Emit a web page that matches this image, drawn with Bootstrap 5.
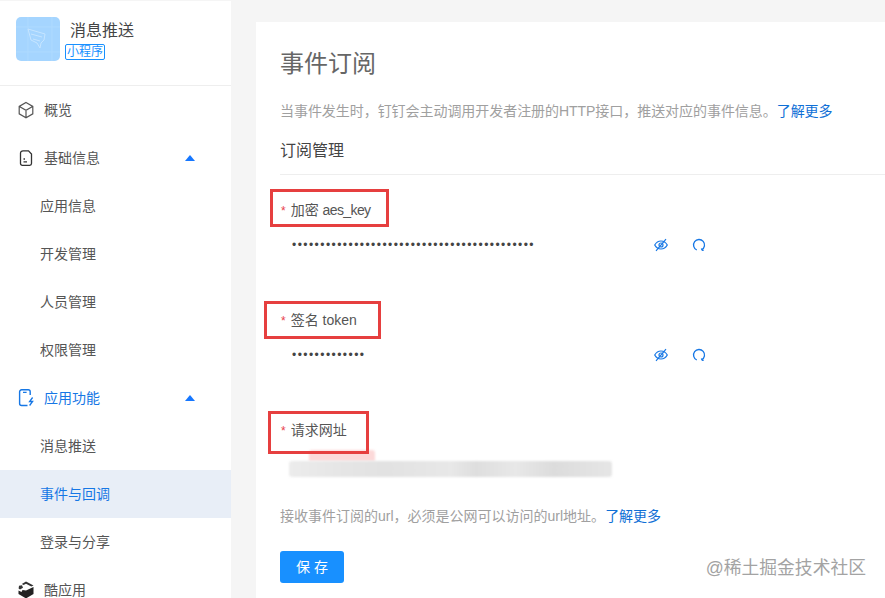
<!DOCTYPE html>
<html lang="zh-CN">
<head>
<meta charset="utf-8">
<title>事件订阅</title>
<link href="https://cdn.jsdelivr.net/npm/bootstrap@5.3.0/dist/css/bootstrap.min.css" rel="stylesheet">
<style>
html,body{height:598px;overflow:hidden}
body{background:#f5f5f5;font-family:"Liberation Sans","Noto Sans CJK SC",sans-serif;font-size:14px;color:#333;padding-top:1px}
.shell{height:597px}
.side{width:231px;flex:none;background:#fff;height:597px;overflow:hidden}
.side-head{height:85px;border-bottom:1px solid #eee;padding:16px 0 0 16px;gap:5px}
.logo{width:44px;height:44px;border-radius:5px;background:#a5d5ff;flex:none;overflow:hidden}
.app-name{font-size:16px;line-height:26px;color:#444;margin-left:5px;padding-top:1px}
.app-tag{display:block;font-size:12px;line-height:14px;border:1px solid #1890ff;border-radius:2px;color:#1890ff;text-align:center;height:16px;width:40px;white-space:nowrap}
.nav-row{height:48px;padding-left:17px;color:#555;gap:9px}
.nav-row svg.ico{width:18px;height:18px;flex:none}
.nav-sub{height:48px;padding-left:40px;color:#555}
.nav-on{color:#1677e5}
.nav-cur{background:#e8eef7;color:#1677e5}
.caret{width:0;height:0;border:5.5px solid transparent;border-top:0;border-bottom:6px solid #1677ff;margin-left:auto;margin-right:36px}
.panel{background:#fff;margin:21px 0 0 25px;flex:1;min-width:0;height:576px;padding:0 0 0 24px;position:relative}
.page-title{font-size:24px;line-height:34px;color:#666;margin:25px 0 0;font-weight:400}
.page-desc{color:#a0a0a0;line-height:22px;margin:19px 0 0;letter-spacing:-.05px}
.more{color:#0f6fd6;text-decoration:none}
.section-title{font-size:16px;line-height:24px;color:#444;margin:17px 0 0;font-weight:400;padding-bottom:11px;border-bottom:1px solid #eee}
.field{height:110px;padding-top:24px;position:relative}
.field-label{line-height:22px;color:#555;margin:0;padding-left:1px}
.req{color:#e8404a;margin-right:5px;font-size:12px}
.tight{letter-spacing:-.6px}
.secret{border:0;background:none;padding:0 0 0 12px;font:12px/22px "Liberation Sans",sans-serif;letter-spacing:1.45px;color:#444;width:300px;outline:0;height:22px}
.value-row{margin-top:12px;height:22px}
.act-a{margin-left:74px}
.act-b{margin-left:24px}
.mark-box{position:absolute;border:3px solid #e63f3f;box-sizing:border-box}
.blur-bar{margin:19px 0 0 9px;width:323px;height:16px;background:linear-gradient(90deg,#ececec 0,#e6e6e6 15%,#e2e2e2 30%,#e8e8e8 50%,#dedede 58%,#e8e8e8 70%,#dcdcdc 82%,#e6e6e6 100%);border-radius:3px;filter:blur(1px)}
.blur-pink{position:absolute;left:29px;top:55px;width:66px;height:11px;background:#fcd9d9;border-radius:3px 3px 0 0;filter:blur(1px)}
.help{color:#a0a0a0;line-height:22px;margin:0}
.save-btn{background:#1890ff;border:0;color:#fff;width:64px;height:32px;border-radius:3px;font-size:14px;padding:0;margin-top:24px;display:block}
.watermark{position:absolute;right:19px;bottom:19px;font-size:17.8px;line-height:22px;color:#a3a3a3;white-space:nowrap}
</style>
</head>
<body>
<div class="shell d-flex">
  <aside class="side">
    <div class="side-head d-flex">
      <div class="logo">
        <svg width="44" height="44" viewBox="0 0 44 44" fill="none"><path d="M0 10h44M0 35h44M12 0v44M36 0v44" stroke="#aedaff"/><path d="M12 12l17 5-1 6-3 3-1 5-3-5-6-3zM15 17l11 3M17 22l7 2" stroke="#c6e5ff"/></svg>
      </div>
      <div>
        <div class="app-name">消息推送</div>
        <span class="app-tag">小程序</span>
      </div>
    </div>
    <div class="nav-row d-flex align-items-center">
      <svg class="ico" viewBox="0 0 18 18" fill="none" stroke="#555" stroke-width="1.2"><path d="M9 1.500l6.800 3.900v7.400L9 16.700l-6.800-3.900V5.400zM2.400 5.500L9 9.300l6.600-3.800M9 9.300v7.200"/></svg>
      <span>概览</span>
    </div>
    <div class="nav-row d-flex align-items-center">
      <svg class="ico" viewBox="0 0 18 18" fill="none" stroke="#333" stroke-width="1.3"><path d="M6 1.800h5.500l3 3.200v9.500a1.800 1.800 0 0 1-1.800 1.800H5.300a1.800 1.800 0 0 1-1.800-1.800V4.300A2.500 2.500 0 0 1 6 1.800zM6.500 12.800h3.500M6.500 10h1.500"/></svg>
      <span>基础信息</span><i class="caret"></i>
    </div>
    <div class="nav-sub d-flex align-items-center">应用信息</div>
    <div class="nav-sub d-flex align-items-center">开发管理</div>
    <div class="nav-sub d-flex align-items-center">人员管理</div>
    <div class="nav-sub d-flex align-items-center">权限管理</div>
    <div class="nav-row nav-on d-flex align-items-center">
      <svg class="ico" viewBox="0 0 18 18" fill="none" stroke="#1677e5" stroke-width="1.4"><path d="M10.500 16.500H4.600a2 2 0 0 1-2-2V2.800a2 2 0 0 1 2-2h6.600a2 2 0 0 1 2 2V6M6 3.400h3.600"/><path d="M15.600 8.500l-3 4h3l-3 4" stroke-width="1.300"/></svg>
      <span>应用功能</span><i class="caret"></i>
    </div>
    <div class="nav-sub d-flex align-items-center">消息推送</div>
    <div class="nav-sub nav-cur d-flex align-items-center">事件与回调</div>
    <div class="nav-sub d-flex align-items-center">登录与分享</div>
    <div class="nav-row d-flex align-items-center">
      <svg class="ico" viewBox="0 0 18 18"><path d="M9 9.500l7.500-3.600v7L9 17.400 1.500 13V9.500l3 1.500 1-2z" fill="#222"/><path d="M9 .6l7.500 3.800-2.200 1L9 2.800 6.600 4 4.800 3zM2 4.800l3-.6 1 2.600-3 1.600-1.400-.8z" fill="#333"/></svg>
      <span>酷应用</span>
    </div>
  </aside>
  <main class="panel">
    <h1 class="page-title">事件订阅</h1>
    <p class="page-desc">当事件发生时，钉钉会主动调用开发者注册的HTTP接口，推送对应的事件信息。<a class="more" href="#">了解更多</a></p>
    <h2 class="section-title">订阅管理</h2>

    <div class="field">
      <p class="field-label"><span class="req">*</span>加密 <span class="tight">aes_key</span></p>
      <div class="value-row d-flex align-items-center">
        <input class="secret" type="password" readonly value="aaaaaaaaaaaaaaaaaaaaaaaaaaaaaaaaaaaaaaaaaaa" aria-label="aes_key">
        <svg class="act-a" width="14" height="14" viewBox="0 0 14 14" fill="none" stroke="#1677e5" stroke-width="1.2"><path d="M.7 7S3 3 7 3s6.300 4 6.300 4-2.300 4-6.300 4S.7 7 .7 7z"/><circle cx="7" cy="7" r="2"/><path d="M12 1.200L2 12.800"/></svg>
        <svg class="act-b" width="14" height="14" viewBox="0 0 14 14" fill="none" stroke="#1677e5" stroke-width="1.3"><path d="M4.800 12A5.500 5.500 0 1 1 9.700 11.800"/><path d="M9.300 10.400l1 2 1.500-.2" stroke-width="1.100"/></svg>
      </div>
      <div class="mark-box" style="left:-10px;top:14px;width:119px;height:38px"></div>
    </div>

    <div class="field">
      <p class="field-label"><span class="req">*</span>签名 token</p>
      <div class="value-row d-flex align-items-center">
        <input class="secret" type="password" readonly value="aaaaaaaaaaaaa" aria-label="token">
        <svg class="act-a" width="14" height="14" viewBox="0 0 14 14" fill="none" stroke="#1677e5" stroke-width="1.2"><path d="M.7 7S3 3 7 3s6.300 4 6.300 4-2.300 4-6.300 4S.7 7 .7 7z"/><circle cx="7" cy="7" r="2"/><path d="M12 1.200L2 12.800"/></svg>
        <svg class="act-b" width="14" height="14" viewBox="0 0 14 14" fill="none" stroke="#1677e5" stroke-width="1.3"><path d="M4.800 12A5.500 5.500 0 1 1 9.700 11.800"/><path d="M9.300 10.400l1 2 1.500-.2" stroke-width="1.100"/></svg>
      </div>
      <div class="mark-box" style="left:-16px;top:16px;width:117px;height:38px"></div>
    </div>

    <div class="field">
      <p class="field-label"><span class="req">*</span>请求网址</p>
      <div class="blur-pink"></div>
      <div class="blur-bar"></div>
      <div class="mark-box" style="left:-12px;top:16px;width:101px;height:43px"></div>
    </div>

    <p class="help">接收事件订阅的url，必须是公网可以访问的url地址。<a class="more" href="#">了解更多</a></p>
    <button class="save-btn btn" type="button">保 存</button>
    <div class="watermark">@稀土掘金技术社区</div>
  </main>
</div>
<script src="https://cdn.jsdelivr.net/npm/bootstrap@5.3.0/dist/js/bootstrap.bundle.min.js"></script>
</body>
</html>
